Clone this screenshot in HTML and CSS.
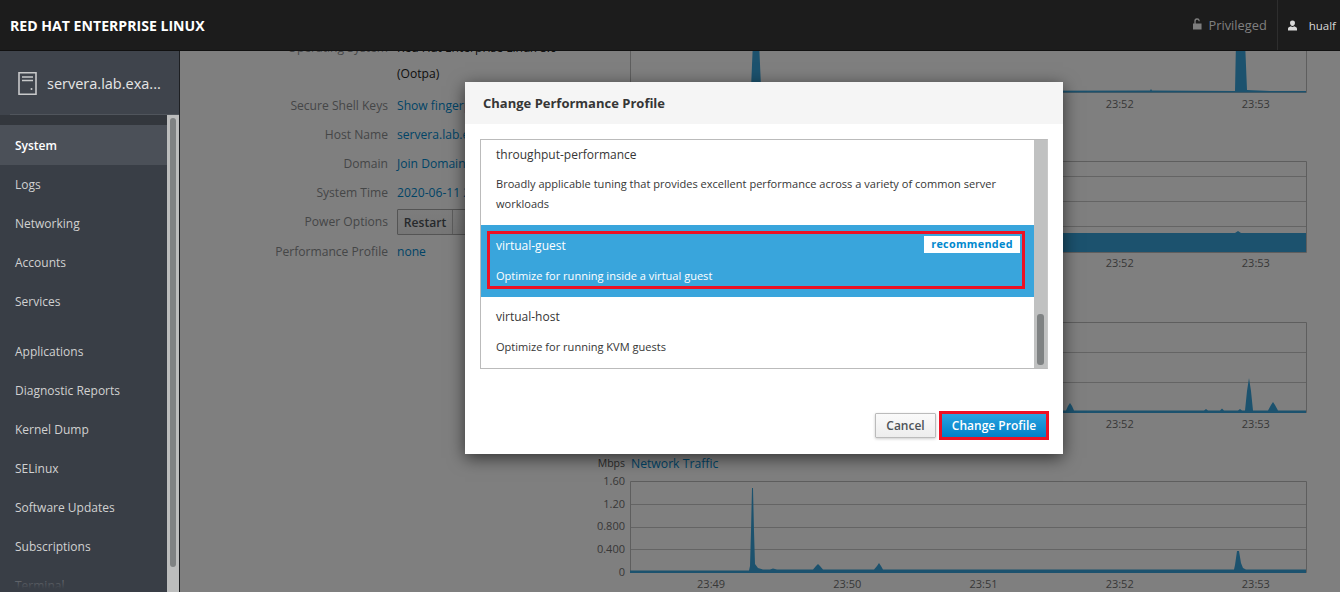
FILE: index.html
```html
<!DOCTYPE html>
<html lang="en">
<head>
<meta charset="utf-8">
<title>Change Performance Profile</title>
<link rel="stylesheet" href="styles.css">
</head>
<body>
<header class="topbar">
  <div class="brand">RED HAT ENTERPRISE LINUX</div>
  <div class="top-actions">
    <div class="priv">
      <svg class="lock" viewBox="0 0 10 12" width="9" height="12"><path class="ic-dim" d="M0 5.500h9.500V12H0zM1.500 5.500V3a3 3 0 0 1 6-.6v.6H6.200V3a1.600 1.600 0 0 0-3.200 0v2.500z"/></svg>
      <span>Privileged</span>
    </div>
    <div class="user">
      <svg class="person" viewBox="0 0 10 11" width="9" height="11"><path class="ic-light" d="M5 0a2.700 2.700 0 0 1 2.700 3C7.700 4.500 6.600 6 5 6S2.300 4.500 2.300 3A2.700 2.700 0 0 1 5 0zM0 11V9c0-1.200 1.500-2 3.200-2.600.6.500 1.100.7 1.800.7s1.200-.2 1.800-.7C8.500 7 10 7.800 10 9v2z"/></svg>
      <span>hualf</span>
    </div>
  </div>
</header>
<div class="app">
  <aside class="sidebar">
    <div class="host">
      <svg class="server" viewBox="0 0 19 23" width="19" height="23"><path class="ic-srv" d="M1 .8h17v21.400H1z"/><path class="ic-srv" d="M4 5h11M4 8.500h11"/><circle class="ic-dot" cx="13.500" cy="17" r="1"/></svg>
      <span class="host-name">servera.lab.exa...</span>
    </div>
    <div class="nav-wrap">
      <nav class="nav">
        <a class="nav-item active">System</a>
        <a class="nav-item">Logs</a>
        <a class="nav-item">Networking</a>
        <a class="nav-item">Accounts</a>
        <a class="nav-item group-end">Services</a>
        <a class="nav-item">Applications</a>
        <a class="nav-item">Diagnostic Reports</a>
        <a class="nav-item">Kernel Dump</a>
        <a class="nav-item">SELinux</a>
        <a class="nav-item">Software Updates</a>
        <a class="nav-item">Subscriptions</a>
        <a class="nav-item">Terminal</a>
      </nav>
      <div class="nav-fade"></div>
      <div class="scrolltrack"><div class="scrollthumb"></div></div>
    </div>
  </aside>
  <main class="main">
    <div class="dash">
      <section class="info">
        <div class="k os">Operating System</div><div class="v black os">Red Hat Enterprise Linux 8.0 (Ootpa)</div>
        <div class="k">Secure Shell Keys</div><div class="v"><a>Show fingerprints</a></div>
        <div class="k">Host Name</div><div class="v"><a>servera.lab.example.com</a></div>
        <div class="k">Domain</div><div class="v"><a>Join Domain</a></div>
        <div class="k">System Time</div><div class="v"><a>2020-06-11 23:53</a></div>
        <div class="k">Power Options</div><div class="v"><span class="btn-group"><span class="restart">Restart</span><span class="caret-seg"></span></span></div>
        <div class="k perf">Performance Profile</div><div class="v perf"><a>none</a></div>
      </section>
      <section class="charts">
        <div class="chart">
          <div class="chart-head"><span class="unit">%</span><a>CPU</a></div>
          <svg class="plot" viewBox="0 0 677 82" width="677" height="82">
            <path class="frame" d="M.5 0V81.500H676.500V0"/>
            <path class="area" d="M0 81.500V80L120 80.300 121 78 123 30 124 0H128L129 30 131 76 133 80 300 80 520 79.500 521 78 522 79.500 605 80 606 30 607 0H613L615 30 617 79 640 80 676 80V81.500Z"/>
          </svg>
          <div class="ticks"><span>23:49</span><span>23:50</span><span>23:51</span><span>23:52</span><span>23:53</span></div>
        </div>
        <div class="chart tight">
          <div class="chart-head"><span class="unit">GiB</span><a>Memory &amp; Swap</a></div>
          <svg class="plot" viewBox="0 0 677 92" width="677" height="92">
            <path class="grid" d="M0 15.500H677M0 40.500H677M0 65.500H677"/>
            <path class="frame" d="M.5 .5H676.500V91.500H.5Z"/>
            <path class="area" d="M1 72H605L608 70 611 72H676V91H1Z"/>
          </svg>
          <div class="ticks"><span>23:49</span><span>23:50</span><span>23:51</span><span>23:52</span><span>23:53</span></div>
        </div>
        <div class="chart">
          <div class="chart-head"><span class="unit">MiB/s</span><a>Disk I/O</a></div>
          <svg class="plot" viewBox="0 0 677 92" width="677" height="92">
            <path class="grid" d="M0 31.500H677M0 61.500H677"/>
            <path class="frame" d="M.5 1.500H676.500V91.500H.5Z"/>
            <path class="area" d="M0 92V89.500H436L438 85 440 82 442 85 444 89.500 574 89.500 576 88 578 89.500 590 89.500 592 87.500 594 89.500 608 89.500 610 88 612 89.500 615 89.500 617 70 619 57 621 70 623 89.500 638 89.500 641 84 643 81 645 84 648 89.500H676V92Z"/>
          </svg>
          <div class="ticks"><span>23:49</span><span>23:50</span><span>23:51</span><span>23:52</span><span>23:53</span></div>
        </div>
        <div class="chart">
          <div class="chart-head"><span class="unit">Mbps</span><a>Network Traffic</a></div>
          <div class="plot-row">
            <div class="yaxis"><span>1.60</span><span>1.20</span><span>0.800</span><span>0.400</span><span>0</span></div>
            <svg class="plot" viewBox="0 0 677 92" width="677" height="92">
              <path class="grid" d="M0 23.500H677M0 46.500H677M0 68.500H677"/>
              <path class="frame" d="M.5 .5H676.500V91.500H.5Z"/>
              <path class="area" d="M0 92V89.500H119L120 85 121 50 122 7 123 7 124 50 125 83 128 87 133 88.500 140 88.500 143 87.500 147 88.500 183 88.500 186 85 188 83 190 85 193 88.500 244 88.500 247 85 249 82 251 85 253 88.500 604 88.500 605 84 607 70 609 70 611 82 613 87 616 88.500 676 88.500V92Z"/>
            </svg>
          </div>
          <div class="ticks"><span>23:49</span><span>23:50</span><span>23:51</span><span>23:52</span><span>23:53</span></div>
        </div>
      </section>
    </div>
    <div class="backdrop">
      <div class="modal">
        <div class="modal-head">Change Performance Profile</div>
        <div class="modal-body">
          <div class="listbox">
            <div class="list">
              <div class="opt first">
                <div class="opt-name"><span>throughput-performance</span></div>
                <div class="opt-desc">Broadly applicable tuning that provides excellent performance across a variety of common server workloads</div>
              </div>
              <div class="opt selected">
                <div class="opt-name"><span>virtual-guest</span><span class="badge">recommended</span></div>
                <div class="opt-desc">Optimize for running inside a virtual guest</div>
                <div class="mark-row"></div>
              </div>
              <div class="opt">
                <div class="opt-name"><span>virtual-host</span></div>
                <div class="opt-desc">Optimize for running KVM guests</div>
              </div>
            </div>
            <div class="list-track"><div class="list-thumb"></div></div>
          </div>
        </div>
        <div class="modal-foot">
          <button class="btn cancel">Cancel</button>
          <button class="btn primary">Change Profile</button>
        </div>
      </div>
    </div>
  </main>
</div>
</body>
</html>
```
FILE: styles.css
```css
* { box-sizing: border-box; }
html, body { margin: 0; height: 100%; overflow: hidden; }
body { font-family: "Open Sans", "Noto Sans", sans-serif; font-size: 12px; background: #fff; color: #000; display: flex; flex-direction: column; }

.topbar { height: 51px; flex: none; background: #1c1c1c; border-bottom: 1px solid #111; display: flex; align-items: center; justify-content: space-between; position: relative; z-index: 3; }
.brand { margin-left: 10px; color: #fff; font-weight: 700; font-size: 14.100px; }
.top-actions { display: flex; height: 100%; align-items: center; }
.priv { display: flex; align-items: center; gap: 7px; color: #808080; font-size: 12.800px; padding-right: 10px; height: 100%; border-right: 1px solid #2e2e2e; }
.lock { margin-top: -2px; }
.ic-dim { fill: #7d7d7d; fill-rule: evenodd; }
.ic-light { fill: #d8d8d8; }
.user { display: flex; align-items: center; gap: 12px; color: #d8d8d8; font-size: 11.5px; padding-left: 10px; padding-right: 4px; }

.app { flex: 1; display: flex; min-height: 0; }
.sidebar { width: 180px; flex: none; background: #393e46; border-right: 1px solid #1d1f22; display: flex; flex-direction: column; }
.host { height: 64px; flex: none; background: #3f444c; display: flex; align-items: center; padding-left: 18px; gap: 10px; position: relative; }
.host::after { content: ""; position: absolute; left: 10px; right: 0; bottom: 0; height: 1px; background: #50555c; }
.server { margin-top: 1px; }
.ic-srv { fill: none; stroke: #c8c9ca; stroke-width: 1.6; }
.ic-dot { fill: #c8c9ca; }
.host-name { color: #e6e6e6; font-size: 14.500px; white-space: nowrap; }
.nav-wrap { flex: 1; display: flex; position: relative; min-height: 0; overflow: hidden; }
.nav { flex: 1; padding-top: 10px; background: linear-gradient(#33373d 10px, #393e46 10px); }
.nav-item { display: flex; align-items: center; height: 39px; padding-left: 15px; color: #d1d1d1; font-size: 12px; }
.nav-item.active { height: 40px; background: #4b5058; color: #fff; font-weight: 600; }
.nav-item.group-end { margin-bottom: 11px; }
.nav-fade { position: absolute; left: 0; width: 167px; bottom: 0; height: 32px; background: linear-gradient(rgba(57,62,70,0), #393e46 90%); }
.scrolltrack { width: 12px; flex: none; background: #bcbdbd; padding: 3px 3px 25px; }
.scrollthumb { height: 100%; background: #7f8283; border-radius: 3px; }

.main { flex: 1; position: relative; overflow: hidden; background: #fff; }
.dash { display: grid; grid-template-columns: 410px 720px; margin-top: -68px; }
.info { display: grid; grid-template-columns: 208px 170px; column-gap: 9px; row-gap: 1px; align-content: start; padding-top: 52px; line-height: 28px; font-size: 12.100px; }
.k { text-align: right; color: #8b8d8f; }
.v a { color: #0088ce; white-space: nowrap; }
.os { line-height: 26px; }
.v.black { color: #222; }
.k.os, .v.os { margin-bottom: 4px; }
.k.perf, .v.perf { margin-top: 1px; }
.btn-group { display: inline-flex; height: 26px; margin-top: 1px; border: 1px solid #a8a8a8; border-radius: 1px; vertical-align: top; background: linear-gradient(#fafafa, #ededed); }
.restart { width: 55px; text-align: center; font-weight: 600; line-height: 25px; color: #4d5258; border-right: 1px solid #bbb; }
.caret-seg { width: 26px; }

.chart { width: 717px; margin-bottom: 20px; }
.chart.tight { margin-bottom: 21px; }
.chart.tight .ticks { margin-top: -1px; }
.chart-head { height: 28px; padding-bottom: 8px; display: flex; align-items: center; font-size: 12.200px; }
.chart-head .unit { width: 35px; text-align: right; color: #555; font-size: 10.500px; margin-right: 6px; }
.chart-head a { color: #0088ce; }
.chart .plot { display: block; margin-left: 40px; }
.plot-row { display: flex; position: relative; }
.yaxis { position: absolute; left: 0; top: -10px; width: 35px; display: flex; flex-direction: column; text-align: right; font-size: 11px; line-height: 20px; color: #707070; white-space: nowrap; }
.yaxis span { height: 20px; margin-bottom: 2.700px; }
.ticks { display: grid; grid-template-columns: repeat(5, 136.200px); padding-left: 53px; height: 20px; align-items: center; text-align: center; font-size: 11px; color: #707070; }
.grid { fill: none; stroke: #c9c9c9; stroke-width: 1; }
.frame { fill: none; stroke: #bcbcbc; stroke-width: 1; }
.area { fill: #39a5dc; }

.backdrop { position: absolute; inset: 0; background: rgba(0,0,0,.5); padding: 31px 0 0 285px; }
.modal { width: 598px; height: 372px; background: #fff; box-shadow: 0 4px 16px rgba(0,0,0,.6); display: flex; flex-direction: column; }
.modal-head { height: 42px; flex: none; background: #f5f5f5; display: flex; align-items: center; padding-left: 18px; font-size: 13px; font-weight: 700; color: #363636; }
.modal-body { padding: 15px 15px 0; flex: none; }
.listbox { height: 230px; border: 1px solid #bbb; border-right-color: #c8c8c8; display: flex; overflow: hidden; }
.list { flex: 1; min-width: 0; overflow: hidden; }
.opt { position: relative; padding: 10px 15px 12px; color: #363636; }
.opt.first { margin-top: -7px; padding-top: 12px; padding-bottom: 11px; }
.opt-name { display: flex; justify-content: space-between; align-items: flex-start; line-height: 20px; font-size: 12px; margin-bottom: 10px; }
.first .opt-name { margin-bottom: 9px; }
.opt-desc { font-size: 11.050px; line-height: 20px; }
.opt.selected { background: #39a5dc; color: #fff; padding-top: 11px; padding-bottom: 11px; }
.badge { width: 96px; height: 17px; background: #fff; color: #0088ce; font-size: 10.800px; font-weight: 700; line-height: 16px; text-align: center; letter-spacing: .3px; }
.selected .opt-name { margin-right: -1px; }
.mark-row { position: absolute; left: 6px; right: 9px; top: 6px; bottom: 8px; border: 3px solid #ec1124; }
.list-track { width: 13px; flex: none; background: #c0c1c1; padding: 174px 3px 3px; }
.list-thumb { height: 100%; background: #7f8283; border-radius: 3px; }
.modal-foot { margin-top: auto; display: flex; justify-content: flex-end; align-items: center; gap: 5px; padding: 0 16px 16px 0; }
.btn { font-family: inherit; font-size: 12px; height: 25px; padding: 0; border-radius: 1px; border: 1px solid #bbb; }
.cancel { width: 61px; background: linear-gradient(#fafafa, #ededed); color: #4d5258; font-weight: 600; box-shadow: 0 1px 3px rgba(0,0,0,.2); }
.primary { width: 106px; border-radius: 0; background: linear-gradient(#2aa3e0, #0080c8); color: #fff; font-weight: 600; border-color: #0b7cc0; outline: 3px solid #ec1124; outline-offset: -1px; }
```
